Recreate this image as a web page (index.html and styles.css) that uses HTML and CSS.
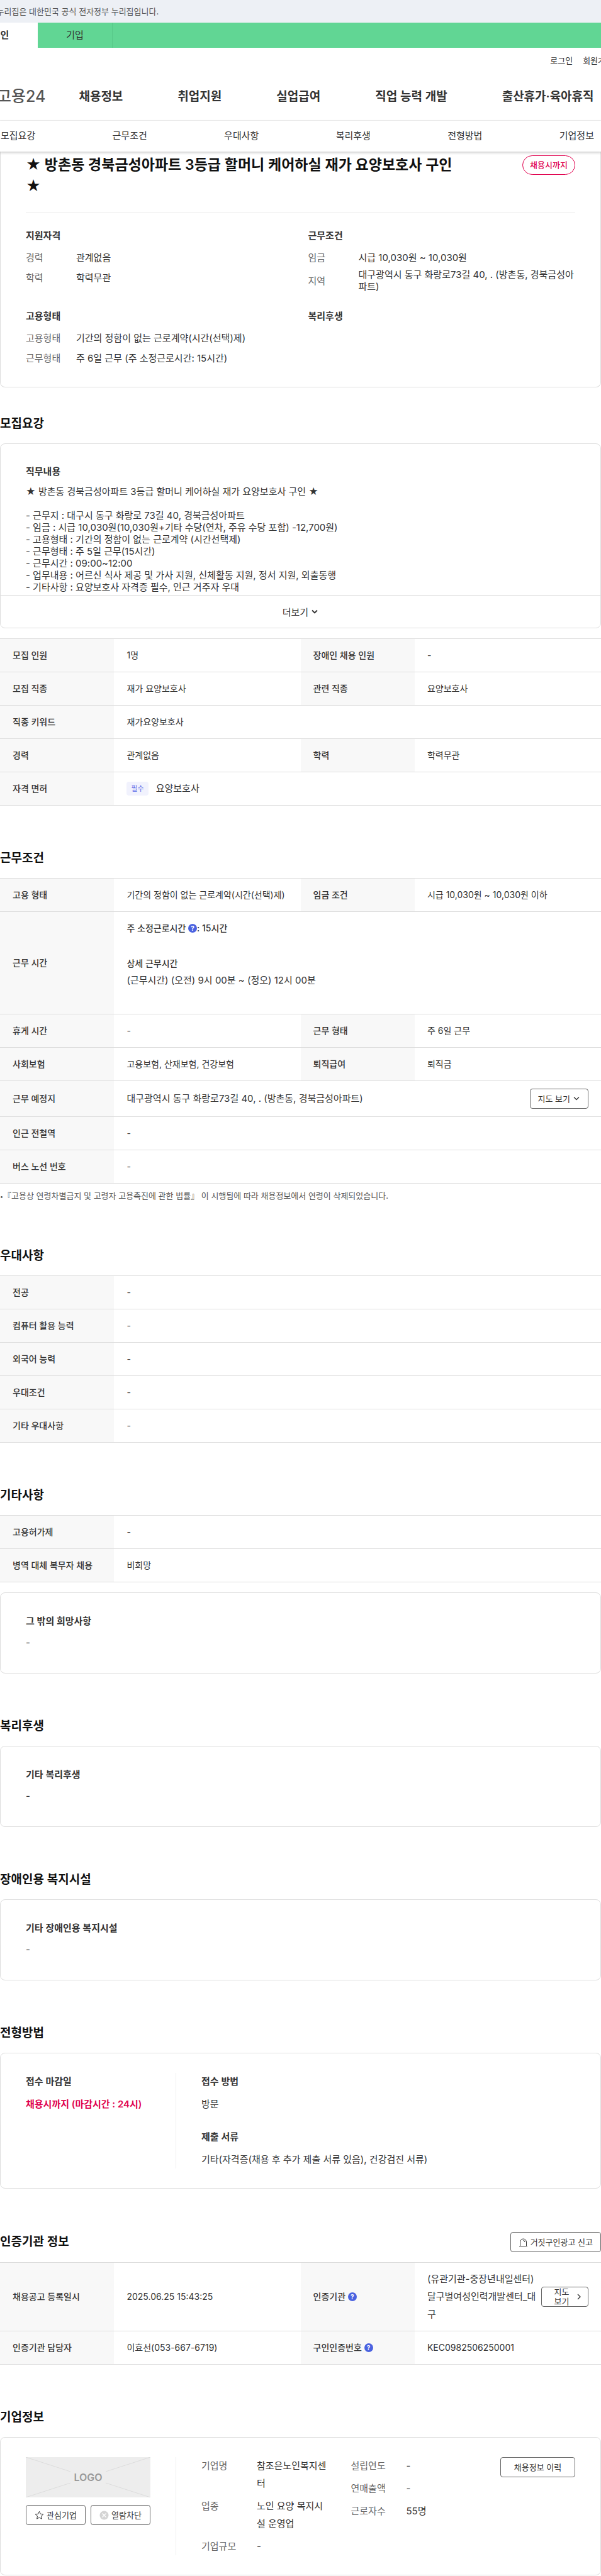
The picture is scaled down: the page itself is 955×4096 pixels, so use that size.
FILE: index.html
```html
<!DOCTYPE html>
<html lang="ko">
<head>
<meta charset="utf-8">
<title>고용24 채용정보</title>
<link rel="stylesheet" href="styles.css">
</head>
<body>

<div class="gov"><p>이 누리집은 대한민국 공식 전자정부 누리집입니다.</p></div>

<header>
	<div class="tabs">
		<a href="#" class="on">개인</a>
		<a href="#">기업</a>
	</div>
	<div class="util">
		<a href="#">로그인</a>
		<a href="#">회원가입</a>
	</div>
	<div class="gnb">
		<a href="#" class="logo">고용24</a>
		<a href="#">채용정보</a>
		<a href="#">취업지원</a>
		<a href="#">실업급여</a>
		<a href="#">직업 능력 개발</a>
		<a href="#">출산휴가·육아휴직</a>
	</div>
</header>

<nav class="anchor">
	<a href="#recruit">모집요강</a>
	<a href="#work">근무조건</a>
	<a href="#prefer">우대사항</a>
	<a href="#welfare">복리후생</a>
	<a href="#apply">전형방법</a>
	<a href="#company">기업정보</a>
</nav>

<main>

<div class="box summary">
	<div class="title">
		<h1>★ 방촌동 경북금성아파트 3등급 할머니 케어하실 재가 요양보호사 구인 ★</h1>
		<span class="badge">채용시까지</span>
	</div>
	<div class="cols">
		<div>
			<h3>지원자격</h3>
			<dl>
				<div><dt>경력</dt><dd>관계없음</dd></div>
				<div><dt>학력</dt><dd>학력무관</dd></div>
			</dl>
		</div>
		<div>
			<h3>근무조건</h3>
			<dl>
				<div><dt>임금</dt><dd>시급 10,030원 ~ 10,030원</dd></div>
				<div><dt>지역</dt><dd>대구광역시 동구 화랑로73길 40, . (방촌동, 경북금성아파트)</dd></div>
			</dl>
		</div>
		<div>
			<h3>고용형태</h3>
			<dl>
				<div><dt>고용형태</dt><dd>기간의 정함이 없는 근로계약(시간(선택)제)</dd></div>
				<div><dt>근무형태</dt><dd>주 6일 근무 (주 소정근로시간: 15시간)</dd></div>
			</dl>
		</div>
		<div>
			<h3>복리후생</h3>
		</div>
	</div>
</div>

<section id="recruit" class="first">
	<h2>모집요강</h2>
	<div class="box duty">
		<div class="duty-text">
			<h3>직무내용</h3>
			<p>★ 방촌동 경북금성아파트 3등급 할머니 케어하실 재가 요양보호사 구인 ★<br>
			<br>
			- 근무지 : 대구시 동구 화랑로 73길 40, 경북금성아파트<br>
			- 임금 : 시급 10,030원(10,030원+기타 수당(연차, 주유 수당 포함) -12,700원)<br>
			- 고용형태 : 기간의 정함이 없는 근로계약 (시간선택제)<br>
			- 근무형태 : 주 5일 근무(15시간)<br>
			- 근무시간 : 09:00~12:00<br>
			- 업무내용 : 어르신 식사 제공 및 가사 지원, 신체활동 지원, 정서 지원, 외출동행<br>
			- 기타사항 : 요양보호사 자격증 필수, 인근 거주자 우대</p>
		</div>
		<button type="button" class="more">더보기
			<svg width="12" height="12" viewBox="0 0 12 12"><path d="M2 3.5l4 4 4-4" fill="none" stroke="#333" stroke-width="1.8"/></svg>
		</button>
	</div>
	<table>
		<tr><th>모집 인원</th><td>1명</td><th>장애인 채용 인원</th><td>-</td></tr>
		<tr><th>모집 직종</th><td>재가 요양보호사</td><th>관련 직종</th><td>요양보호사</td></tr>
		<tr><th>직종 키워드</th><td colspan="3">재가요양보호사</td></tr>
		<tr><th>경력</th><td>관계없음</td><th>학력</th><td>학력무관</td></tr>
		<tr><th>자격 면허</th><td colspan="3"><div class="license"><span class="chip">필수</span>요양보호사</div></td></tr>
	</table>
</section>

<section id="work">
	<h2>근무조건</h2>
	<table>
		<tr><th>고용 형태</th><td>기간의 정함이 없는 근로계약(시간(선택)제)</td><th>임금 조건</th><td>시급 10,030원 ~ 10,030원 이하</td></tr>
		<tr><th>근무 시간</th><td colspan="3" class="time">
			<p><b>주 소정근로시간 <button type="button" class="help">?</button>: 15시간</b></p>
			<p class="detail"><b>상세 근무시간</b><br><span class="big">(근무시간) (오전) 9시 00분 ~ (정오) 12시 00분</span></p>
		</td></tr>
		<tr><th>휴게 시간</th><td>-</td><th>근무 형태</th><td>주 6일 근무</td></tr>
		<tr><th>사회보험</th><td>고용보험, 산재보험, 건강보험</td><th>퇴직급여</th><td>퇴직금</td></tr>
		<tr><th>근무 예정지</th><td colspan="3" class="place"><div class="split">
			<span class="big">대구광역시 동구 화랑로73길 40, . (방촌동, 경북금성아파트)</span>
			<button type="button" class="btn">지도 보기
				<svg width="12" height="12" viewBox="0 0 12 12"><path d="M2 3.5l4 4 4-4" fill="none" stroke="#333" stroke-width="1.3"/></svg>
			</button>
		</div></td></tr>
		<tr><th>인근 전철역</th><td colspan="3">-</td></tr>
		<tr><th>버스 노선 번호</th><td colspan="3">-</td></tr>
	</table>
	<ul class="note">
		<li>『고용상 연령차별금지 및 고령자 고용촉진에 관한 법률』 이 시행됨에 따라 채용정보에서 연령이 삭제되었습니다.</li>
	</ul>
</section>

<section id="prefer">
	<h2>우대사항</h2>
	<table>
		<tr><th>전공</th><td colspan="3">-</td></tr>
		<tr><th>컴퓨터 활용 능력</th><td colspan="3">-</td></tr>
		<tr><th>외국어 능력</th><td colspan="3">-</td></tr>
		<tr><th>우대조건</th><td colspan="3">-</td></tr>
		<tr><th>기타 우대사항</th><td colspan="3">-</td></tr>
	</table>
</section>

<section id="etc">
	<h2>기타사항</h2>
	<table>
		<tr><th>고용허가제</th><td colspan="3">-</td></tr>
		<tr><th>병역 대체 복무자 채용</th><td colspan="3">비희망</td></tr>
	</table>
	<div class="box memo">
		<h3>그 밖의 희망사항</h3>
		<p>-</p>
	</div>
</section>

<section id="welfare">
	<h2>복리후생</h2>
	<div class="box memo">
		<h3>기타 복리후생</h3>
		<p>-</p>
	</div>
</section>

<section id="facility">
	<h2>장애인용 복지시설</h2>
	<div class="box memo">
		<h3>기타 장애인용 복지시설</h3>
		<p>-</p>
	</div>
</section>

<section id="apply">
	<h2>전형방법</h2>
	<div class="box apply">
		<div class="side">
			<h3>접수 마감일</h3>
			<p class="deadline">채용시까지 (마감시간 : 24시)</p>
		</div>
		<div class="body">
			<h3>접수 방법</h3>
			<p>방문</p>
			<h3>제출 서류</h3>
			<p>기타(자격증(채용 후 추가 제출 서류 있음), 건강검진 서류)</p>
		</div>
	</div>
</section>

<section id="cert">
	<div class="head">
		<h2>인증기관 정보</h2>
		<button type="button" class="btn">
			<svg width="15" height="15" viewBox="0 0 15 15"><path d="M1 13.5h13M2.500 13.500V7a5 5 0 0 1 10 0v6.500M7.500 4.500A2.500 2.500 0 0 1 10 7" fill="none" stroke="#333"/></svg>
			거짓구인광고 신고
		</button>
	</div>
	<table>
		<tr><th>채용공고 등록일시</th><td>2025.06.25 15:43:25</td><th>인증기관 <button type="button" class="help">?</button></th>
			<td><div class="split org"><span>(유관기관-중장년내일센터)달구벌여성인력개발센터_대구</span>
			<button type="button" class="btn map"><span>지도 보기</span>
				<svg width="12" height="12" viewBox="0 0 12 12"><path d="M4 2l4 4-4 4" fill="none" stroke="#333" stroke-width="1.3"/></svg>
			</button></div></td></tr>
		<tr><th>인증기관 담당자</th><td>이효선(053-667-6719)</td><th>구인인증번호 <button type="button" class="help">?</button></th><td>KEC0982506250001</td></tr>
	</table>
</section>

<section id="company">
	<h2>기업정보</h2>
	<div class="box company">
		<div class="side">
			<svg class="noimg" viewBox="0 0 198 64" role="img" aria-label="LOGO">
				<rect width="198" height="64" fill="#ededed"/>
				<path d="M0 0l71 23M127 41l71 23M198 0l-71 23M71 41L0 64" stroke="#dcdcdc" fill="none"/>
				<text x="99" y="38" text-anchor="middle">LOGO</text>
			</svg>
			<div class="btns">
				<button type="button" class="btn">
					<svg width="15" height="15" viewBox="0 0 15 15"><path d="M7.500 1.300l1.900 4 4.400.5-3.300 3 .9 4.400-3.900-2.200-3.900 2.200.9-4.400-3.300-3 4.400-.5z" fill="none" stroke="#333"/></svg>
					관심기업
				</button>
				<button type="button" class="btn">
					<svg width="15" height="15" viewBox="0 0 15 15"><circle cx="7.500" cy="7.500" r="7" fill="#d4d4d4"/><path d="M4.500 4.500l6 6M10.500 4.500l-6 6" stroke="#fff" stroke-width="1.300"/></svg>
					열람차단
				</button>
			</div>
		</div>
		<div class="body">
			<dl>
				<dt>기업명</dt><dd>참조은노인복지센터</dd>
				<dt>업종</dt><dd>노인 요양 복지시설 운영업</dd>
				<dt>기업규모</dt><dd>-</dd>
			</dl>
			<dl>
				<dt>설립연도</dt><dd>-</dd>
				<dt>연매출액</dt><dd>-</dd>
				<dt>근로자수</dt><dd>55명</dd>
			</dl>
			<button type="button" class="btn history">채용정보 이력</button>
		</div>
	</div>
</section>

</main>
</body>
</html>
```
FILE: styles.css
```css
* {box-sizing: border-box;}

body {
  margin: 0;
  overflow-x: hidden;
  font-family: Inter, "Noto Sans CJK KR", sans-serif;
  font-size: 15px;
  line-height: 19px;
  color: #333;
  background: #fff;
}

h1, h2, h3, p, dl, dd, ul {margin: 0; padding: 0;}

a {color: inherit; text-decoration: none;}

button {
  font-family: inherit;
  color: #333;
  cursor: pointer;
}

/* government notice */
.gov {
  height: 36px;
  background-color: #edf0f5;
  overflow: hidden;
}

.gov p {
  margin-left: -21px;
  font-size: 13px;
  line-height: 36px;
  color: #555;
}

/* header */
.tabs {
  display: flex;
  height: 40px;
  background-color: #61d694;
}

.tabs a {
  width: 119px;
  border-right: 1px solid #57c889;
  text-align: center;
  line-height: 40px;
}

.tabs .on {
  margin-left: -59px;
  background-color: #fff;
  border: none;
  font-weight: bold;
}

.util {
  display: flex;
  gap: 16px;
  height: 40px;
  margin-right: -29px;
  padding-right: 10px;
  justify-content: flex-end;
  font-size: 13px;
  line-height: 40px;
  white-space: nowrap;
}

.gnb {
  display: flex;
  align-items: center;
  gap: 87px;
  height: 76px;
  border-bottom: 1px solid #eee;
  font-size: 19px;
  font-weight: 600;
  white-space: nowrap;
}

.gnb .logo {
  margin: 0 -34px 0 -5px;
  font-size: 25px;
  font-weight: 500;
  color: #555;
}

.anchor {
  display: flex;
  justify-content: space-between;
  position: relative;
  height: 49px;
  padding: 0 11px 0 1px;
  line-height: 48px;
  background-color: #fff;
  box-shadow: 0 2px 4px rgba(0,0,0,0.2);
}

/* common parts */
h2 {
  margin-bottom: 16px;
  font-size: 19px;
  line-height: 30px;
  font-weight: 600;
  color: #111;
}

h3 {
  font-size: 15px;
  line-height: 20px;
  font-weight: 600;
}

section {margin-top: 69px;}

section.first {margin-top: 43px;}

.box {
  border: 1px solid #ddd;
  border-radius: 8px;
  padding: 32px 40px;
}

.btn {
  display: flex;
  align-items: center;
  justify-content: center;
  gap: 4px;
  height: 32px;
  padding: 0 12px;
  border: 1px solid #666;
  border-radius: 4px;
  background-color: #fff;
  font-size: 13px;
  line-height: 16px;
}

.btn svg {flex: none;}

table {
  width: 100%;
  table-layout: fixed;
  border-collapse: collapse;
  font-size: 14px;
  line-height: 22px;
}

th, td {
  border-top: 1px solid #ddd;
  border-bottom: 1px solid #ddd;
  padding: 15px 20px;
  text-align: left;
}

th {
  width: 19%;
  background-color: #f8f8f8;
  font-weight: 500;
}

.big {font-size: 15px;}

.help {
  width: 14px;
  height: 14px;
  padding: 0;
  border: none;
  border-radius: 50%;
  background-color: #4a62e0;
  color: #fff;
  font-size: 10px;
  line-height: 14px;
  font-weight: bold;
  vertical-align: 1px;
}

/* summary */
.summary {
  border-top: none;
  border-radius: 0 0 8px 8px;
  padding-top: 4px;
}

.title {
  display: flex;
  justify-content: space-between;
  align-items: flex-start;
  padding-bottom: 24px;
  border-bottom: 1px solid #eee;
}

h1 {
  width: 680px;
  font-size: 23px;
  line-height: 34px;
  font-weight: 600;
  color: #111;
}

.badge {
  width: 84px;
  margin-top: 2px;
  border: 1px solid #e0004d;
  border-radius: 16px;
  text-align: center;
  font-size: 13px;
  line-height: 29px;
  font-weight: 500;
  color: #e0004d;
}

.cols {
  display: grid;
  grid-template-columns: 1fr 1fr;
  column-gap: 24px;
  row-gap: 28px;
  padding-top: 27px;
}

.cols h3 {margin-bottom: 10px;}

.cols dl {
  display: flex;
  flex-direction: column;
  gap: 4px;
}

.cols dl div {
  display: flex;
  align-items: center;
  min-height: 28px;
}

.cols dt {
  flex: none;
  width: 80px;
  color: #666;
}

.cols dd {word-break: break-all;}

/* duty */
.duty {
  padding: 0;
  margin-bottom: 16px;
}

.duty-text {
  height: 240px;
  padding: 34px 40px 0;
  overflow: hidden;
}

.duty-text p {margin-top: 12px;}

.more {
  display: block;
  width: 100%;
  height: 52px;
  border: none;
  border-top: 1px solid #ddd;
  border-radius: 0 0 8px 8px;
  background: none;
  font-size: 15px;
}

.license {
  display: flex;
  align-items: center;
  gap: 12px;
  font-size: 15px;
}

.chip {
  padding: 0 7px;
  border-radius: 4px;
  background-color: #f1f2fd;
  color: #5b6be8;
  font-size: 11px;
}

td.time {
  height: 163px;
  vertical-align: top;
}

.time b {font-weight: 500;}

.time .detail {
  margin-top: 31px;
  line-height: 27px;
}

.split {
  display: flex;
  align-items: center;
  justify-content: space-between;
}

td.place {padding: 12px 20px;}

.note {
  list-style: none;
  padding-top: 9px;
  font-size: 13px;
  line-height: 20px;
  color: #555;
}

.note li::before {
  content: "•";
  font-size: 9px;
}

/* memo boxes */
.memo {padding: 35px 40px 36px;}

.memo p {
  margin-top: 12px;
  line-height: 24px;
}

table + .memo {margin-top: 16px;}

/* apply, company */
.apply, .company {
  display: flex;
  padding: 31px 40px;
}

.side {
  flex: none;
  width: 239px;
  padding-right: 40px;
  border-right: 1px solid #eee;
}

.body {
  flex: 1;
  padding-left: 40px;
}

.apply h3 {line-height: 28px;}

.apply p {
  margin-top: 8px;
  line-height: 28px;
}

.apply p + h3 {margin-top: 24px;}

.apply .side {white-space: nowrap;}

.apply .deadline {
  color: #e0004d;
  font-weight: 600;
}

.head {
  display: flex;
  justify-content: space-between;
  align-items: flex-start;
}

.head h2 {line-height: 32px;}

.org {
  gap: 7px;
  font-size: 15px;
  line-height: 28px;
  word-break: break-all;
}

td .org {margin: -3px 0;}

.map {
  flex: none;
  width: 75px;
  padding: 0 8px 0 14px;
  line-height: 15px;
}

.company .body {
  display: flex;
  justify-content: space-between;
}

.company dl {
  display: grid;
  grid-template-columns: 88px 112px;
  row-gap: 8px;
  line-height: 28px;
  align-content: start;
  word-break: break-all;
}

.company dt {color: #666;}

.noimg {display: block; width: 100%;}

.noimg text {
  font-size: 16px;
  font-weight: 600;
  fill: #999;
}

.btns {
  display: flex;
  gap: 8px;
  margin-top: 12px;
}

.btns .btn {
  flex: 1;
  padding: 0;
}

.history {width: 119px;}
```
